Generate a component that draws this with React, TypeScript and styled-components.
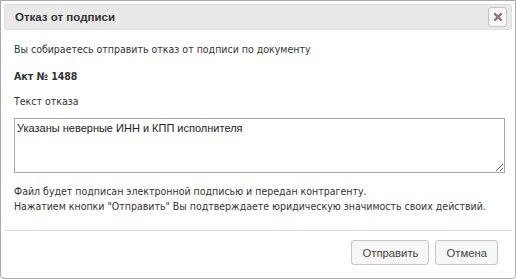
import styled, { createGlobalStyle } from 'styled-components'

const GlobalStyle = createGlobalStyle`
  html, body {
    margin: 0;
    padding: 0;
    background: #ffffff;
  }
`

const Dialog = styled.div`
  box-sizing: border-box;
  width: 516px;
  height: 279px;
  display: flex;
  flex-direction: column;
  padding: 3px;
  border: 1px solid #aaaaaa;
  border-radius: 0 0 4px 4px;
  background: #ffffff;
  font-family: 'DejaVu Sans Condensed', Tahoma, sans-serif;
`

const TitleBar = styled.div`
  box-sizing: border-box;
  height: 26px;
  display: flex;
  align-items: center;
  justify-content: space-between;
  padding: 0 4px 0 10px;
  border: 1px solid #dddddd;
  border-radius: 3px;
  background: #e9e9e9;
`

const Title = styled.span`
  font-family: 'Liberation Sans', Arial, sans-serif;
  font-weight: 700;
  font-size: 11.5px;
  color: #333333;
`

const CloseButton = styled.button`
  box-sizing: border-box;
  width: 19px;
  height: 20px;
  padding: 0;
  display: flex;
  align-items: center;
  justify-content: center;
  border: 1px solid #c5c5c5;
  border-radius: 3px;
  background: #f6f6f6;
`

const Content = styled.div`
  flex: 1;
  display: flex;
  flex-direction: column;
  padding: 12px 8px 0 10px;
  font-size: 10.5px;
  color: #333333;
`

const Line = styled.p<{ $bold?: boolean; $gap?: number }>`
  margin: 0 0 ${(p) => p.$gap ?? 0}px;
  line-height: 15px;
  white-space: nowrap;
  font-weight: ${(p) => (p.$bold ? 700 : 400)};
`

const Reason = styled.textarea`
  box-sizing: border-box;
  width: 491px;
  height: 55px;
  margin: 0 0 11px;
  padding: 3px 2px;
  border: 1px solid #a9a9a9;
  font-family: 'Liberation Sans', Arial, sans-serif;
  font-size: 11px;
  color: #222222;
  resize: vertical;
`

const ButtonPane = styled.div`
  display: flex;
  justify-content: flex-end;
  gap: 6px;
  padding: 9px 14px 10px 0;
  border-top: 1px solid #dddddd;
`

const Button = styled.button`
  box-sizing: border-box;
  height: 25px;
  padding: 0 10px;
  border: 1px solid #c5c5c5;
  border-radius: 3px;
  background: #f6f6f6;
  font-family: 'Liberation Sans', Arial, sans-serif;
  font-size: 11.3px;
  color: #454545;
`

const App = (): JSX.Element => {
  return (
    <Dialog>
      <GlobalStyle />
      <TitleBar>
        <Title>Отказ от подписи</Title>
        <CloseButton aria-label="close">
          <svg width="10" height="10" viewBox="0 0 10 10">
            <path d="M1.5 1.5 L8.5 8.5 M8.5 1.5 L1.5 8.5" stroke="#6b6f8f" strokeWidth="2.4" />
            <path d="M1.5 1.5 L8.5 8.5 M8.5 1.5 L1.5 8.5" stroke="#c07a4a" strokeWidth="0.8" />
          </svg>
        </CloseButton>
      </TitleBar>
      <Content>
        <Line $gap={12}>Вы собираетесь отправить отказ от подписи по документу</Line>
        <Line $bold $gap={10}>Акт № 1488</Line>
        <Line $gap={9}>Текст отказа</Line>
        <Reason defaultValue="Указаны неверные ИНН и КПП исполнителя" />
        <Line>Файл будет подписан электронной подписью и передан контрагенту.</Line>
        <Line>Нажатием кнопки "Отправить" Вы подтверждаете юридическую значимость своих действий.</Line>
      </Content>
      <ButtonPane>
        <Button>Отправить</Button>
        <Button>Отмена</Button>
      </ButtonPane>
    </Dialog>
  )
}

export default App
